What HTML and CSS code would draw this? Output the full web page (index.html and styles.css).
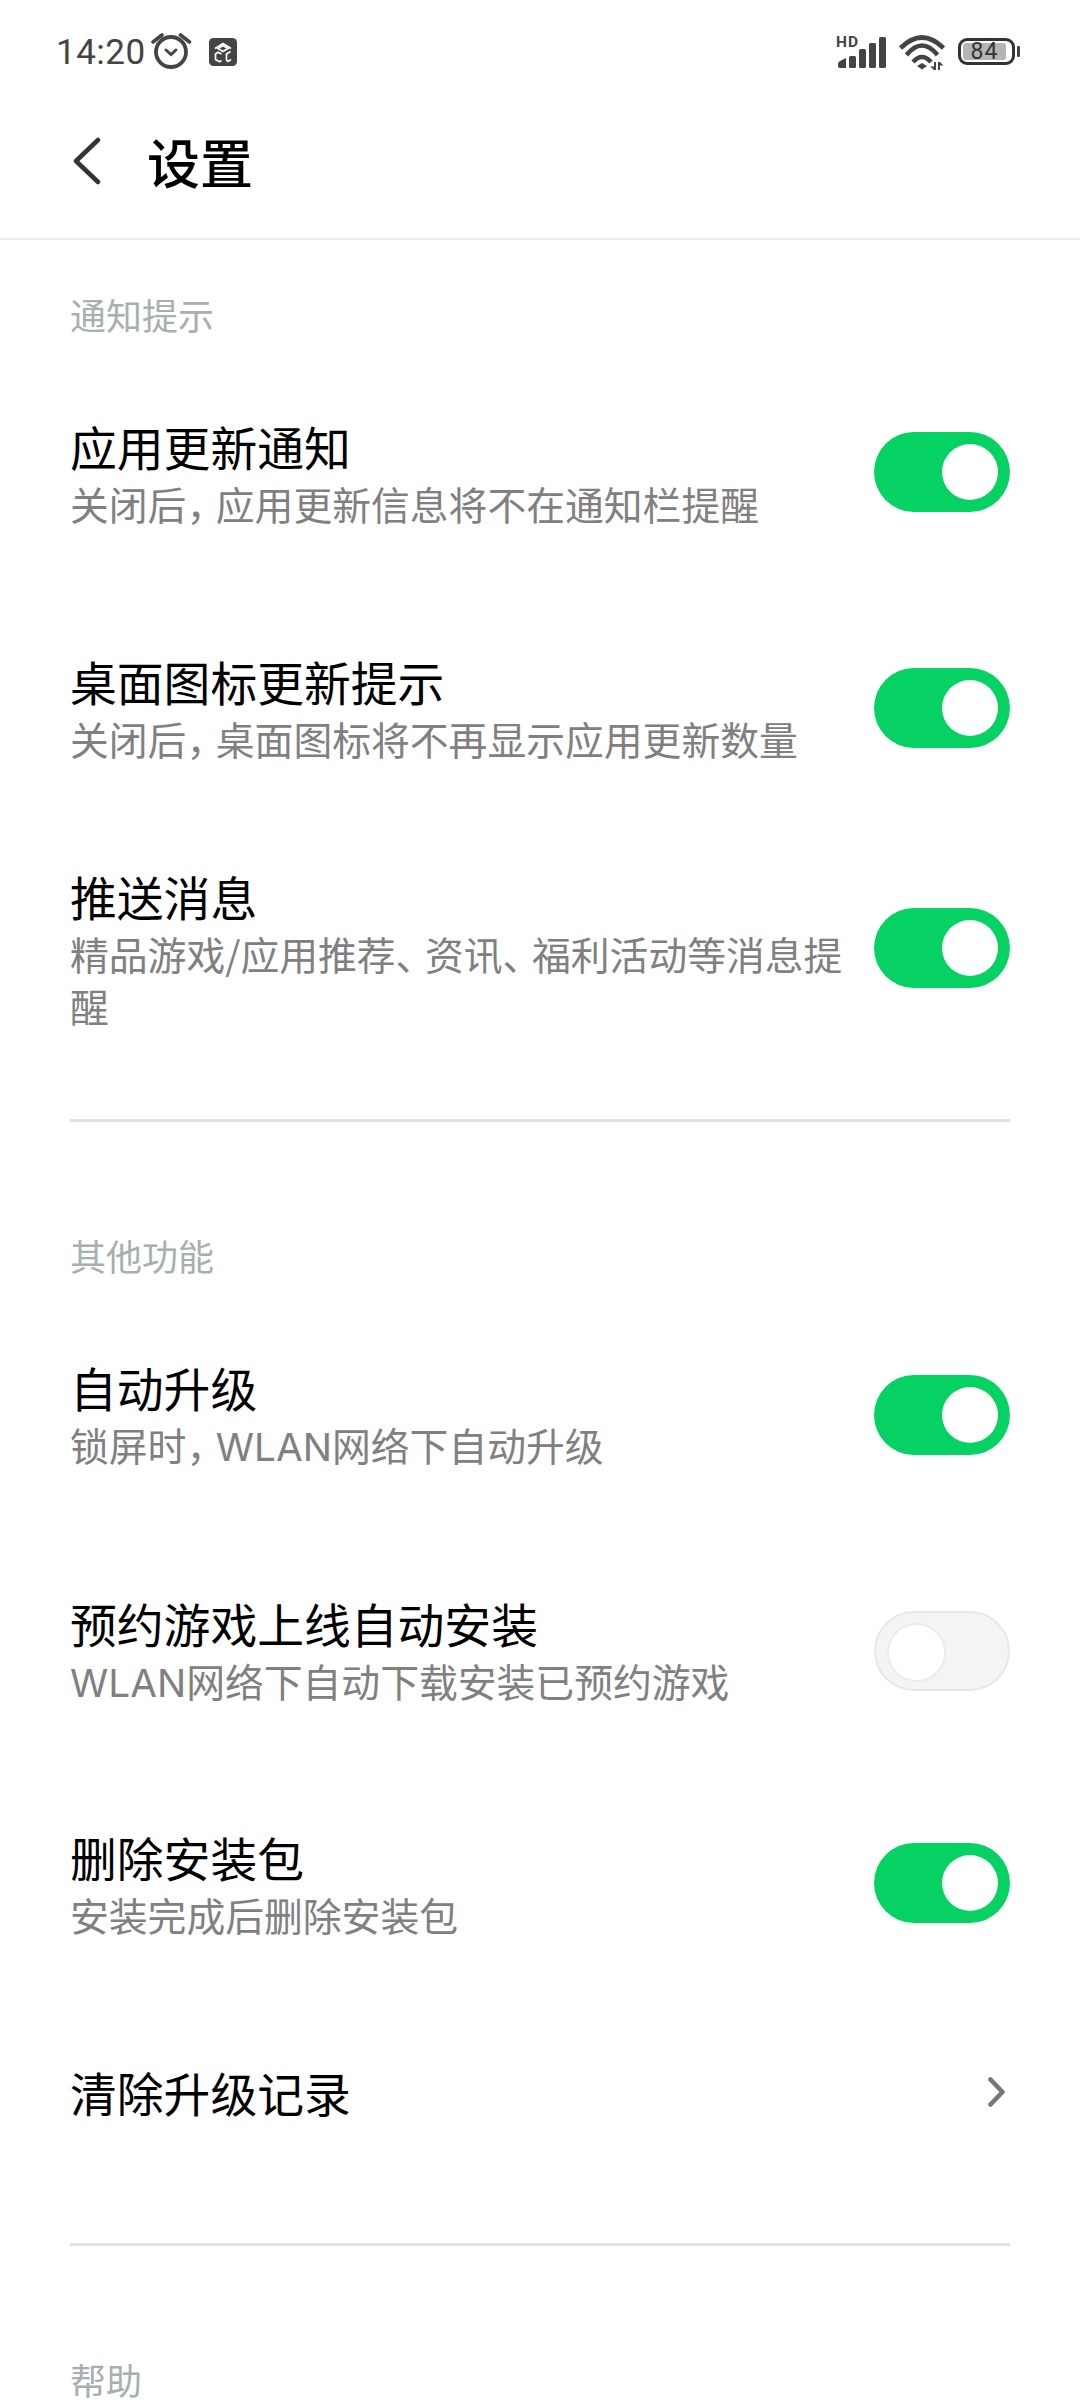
FILE: index.html
```html
<!DOCTYPE html>
<html lang="zh-CN">
<head>
<meta charset="utf-8">
<title>设置</title>
<link rel="stylesheet" href="styles.css">
</head>
<body>
<div class="status">
  <div class="status-left">
    <span class="time">14:20</span>
    <svg class="alarm" width="42" height="40" viewBox="0 0 42 40"><g fill="none" stroke="#444" stroke-linecap="round"><circle cx="21" cy="22" r="15" stroke-width="3.800"/><path d="M16 20l5 4.500 5-4.500" stroke-width="3"/><path d="M3 12 12 5M39.500 12 30.500 5" stroke-width="3.600"/></g></svg>
    <svg class="app" width="28" height="28" viewBox="0 0 28 28"><rect width="28" height="28" rx="4.500" fill="#444"/><g fill="none" stroke="#fff" stroke-width="1.700"><path d="M14 7.500l5 3-5 3-5-3z"/><path d="M6 10.500 14 5.500l8 5"/><path d="M12.500 16 9 14.200 6.500 16v5.500l4 2.200 2-1.200"/><path d="M21.500 13.500l-4 2.500v6l1.500 1.500 3-2"/></g></svg>
  </div>
  <div class="status-right">
    <div class="signal">
      <span class="hd">HD</span>
      <svg width="48" height="31" viewBox="0 0 48 31"><g fill="#444"><path d="M0 27q0-2 2-3l6-3v10H2q-2 0-2-2z"/><rect x="11" y="19" width="7" height="12" rx="1.500"/><rect x="21" y="12" width="7" height="19" rx="1.500"/><rect x="31" y="6" width="7" height="25" rx="1.500"/><rect x="41" y="0" width="7" height="31" rx="1.500"/></g></svg>
    </div>
    <svg class="wifi" width="46" height="36" viewBox="0 0 46 36"><g fill="none" stroke="#444" stroke-width="4.600"><path d="M1.500 13Q23-8 44.500 13"/><path d="M7.500 20Q23 1 38.500 20"/><path d="M14 27Q23 17 32 27"/></g><path d="M18 31l5-3 5 3-5 3.500zM37 27v8h-2l-4-3.500h4V27zM39 35v-8h2l3.500 3.500H41V35z" fill="#444"/></svg>
    <div class="battery">
      <div class="battery-body"><span class="battery-level">84</span></div>
      <span class="battery-nub"></span>
    </div>
  </div>
</div>

<header class="topbar">
  <svg class="back" width="28" height="48" viewBox="0 0 28 48"><path d="M25 3 3 24l22 21" fill="none" stroke="#333" stroke-width="4.500" stroke-linecap="round" stroke-linejoin="round"/></svg>
  <h1 class="title">设置</h1>
</header>

<main class="content">
  <section class="section first">
    <h2 class="label">通知提示</h2>
    <div class="row r1">
      <div class="text"><div class="name">应用更新通知</div><div class="desc">关闭后<span class="punct">，</span>应用更新信息将不在通知栏提醒</div></div>
      <span class="toggle"></span>
    </div>
    <div class="row r2">
      <div class="text"><div class="name">桌面图标更新提示</div><div class="desc">关闭后<span class="punct">，</span>桌面图标将不再显示应用更新数量</div></div>
      <span class="toggle"></span>
    </div>
    <div class="row r3">
      <div class="text"><div class="name">推送消息</div><div class="desc">精品游戏/应用推荐<span class="punct">、</span>资讯<span class="punct">、</span>福利活动等消息提醒</div></div>
      <span class="toggle"></span>
    </div>
  </section>
  <section class="section second">
    <h2 class="label">其他功能</h2>
    <div class="row r4">
      <div class="text"><div class="name">自动升级</div><div class="desc">锁屏时<span class="punct">，</span><span class="latin">WLAN</span>网络下自动升级</div></div>
      <span class="toggle"></span>
    </div>
    <div class="row r5">
      <div class="text"><div class="name">预约游戏上线自动安装</div><div class="desc"><span class="latin">WLAN</span>网络下自动下载安装已预约游戏</div></div>
      <span class="toggle off"></span>
    </div>
    <div class="row r6">
      <div class="text"><div class="name">删除安装包</div><div class="desc">安装完成后删除安装包</div></div>
      <span class="toggle"></span>
    </div>
    <div class="row r7">
      <div class="name">清除升级记录</div>
      <svg class="chev" width="22" height="30" viewBox="0 0 22 30"><path d="M2.500 2.500 14.500 15 2.500 27.500" fill="none" stroke="#777" stroke-width="4.600" stroke-linecap="round" stroke-linejoin="round"/></svg>
    </div>
  </section>
  <section class="section">
    <h2 class="label">帮助</h2>
  </section>
</main>
</body>
</html>
```
FILE: styles.css
```css
* { box-sizing: border-box; }
html, body { margin: 0; padding: 0; }
body {
  width: 1080px;
  height: 2400px;
  overflow: hidden;
  background: #fff;
  color: #000;
  font-family: "Noto Sans CJK SC", "Noto Sans", sans-serif;
}
.status {
  height: 104px;
  padding: 30px 60px 0 56px;
  display: flex;
  justify-content: space-between;
  align-items: flex-start;
}
.status-left { display: flex; align-items: flex-start; }
.time { font: 35px/40px Roboto, sans-serif; color: #444; letter-spacing: 0.5px; width: 94px; margin-top: 3px; }
.alarm { display: block; }
.app { display: block; margin-left: 17px; margin-top: 8px; }
.status-right { display: flex; align-items: flex-start; }
.signal { position: relative; width: 50px; height: 40px; margin-top: 7px; padding-left: 2px; }
.signal svg { display: block; }
.hd { position: absolute; left: 0; top: -3px; font: 700 15.500px/16px Roboto, sans-serif; letter-spacing: 1px; color: #444; }
.wifi { display: block; margin-left: 13px; margin-top: 5px; }
.battery { display: flex; align-items: center; margin-left: 13px; margin-top: 8px; }
.battery-body {
  width: 57px; height: 27px;
  border: 3px solid #333;
  border-radius: 9px;
  padding: 2px 6px 2px 2px;
}
.battery-level {
  display: block; height: 17px; width: 43px;
  background: #b5b5b5;
  border-radius: 3px;
  font: 23px/17px Roboto, sans-serif;
  color: #333;
  text-align: center;
  letter-spacing: 1px;
}
.battery-nub { width: 3px; height: 11px; margin-left: 2px; background: #444; border-radius: 1px; }
.topbar {
  height: 136px;
  padding: 0 0 20px 73px;
  display: flex;
  align-items: center;
  border-bottom: 2px solid #ececec;
}
.back { display: block; }
.title { margin: 0 0 0 46px; font-size: 53px; line-height: 70px; font-weight: 500; color: #000; }
.content { padding: 0 70px; }
.section { border-top: 3px solid #e2e2e2; }
.section.first { border-top: 0; padding-bottom: 48px; }
.section.second { padding-bottom: 58px; }
.label { margin: 108px 0 0; font-size: 36px; line-height: 50px; font-weight: 400; color: #a6b0ae; }
.first .label { margin-top: 49px; }
.row { display: flex; align-items: center; justify-content: space-between; }
.text { width: 780px; }
.name { font-size: 46.800px; line-height: 60px; color: #000; }
.desc { font-size: 38.800px; line-height: 52px; color: #808080; margin-top: 1px; }
.punct { font-feature-settings: "halt"; margin-right: 10px; }
.latin { font-family: Inter, sans-serif; }
.r1 { margin-top: 15px; height: 236px; }
.r2 { height: 235px; }
.r3 { height: 246px; }
.r4 { margin-top: 15px; height: 240px; }
.r5 { height: 232px; }
.r6 { height: 232px; }
.r7 { height: 186px; }
.toggle {
  position: relative;
  flex: none;
  width: 136px;
  height: 80px;
  border-radius: 40px;
  background: #06d163;
}
.toggle::after {
  content: "";
  position: absolute;
  top: 12px;
  right: 12px;
  width: 56px;
  height: 56px;
  border-radius: 50%;
  background: #fff;
}
.toggle.off { background: #f4f4f4; border: 2px solid #e8e8e8; }
.toggle.off::after { top: 10px; left: 11px; right: auto; width: 55px; height: 55px; border: 2px solid #ececec; }
.chev { display: block; }
```
